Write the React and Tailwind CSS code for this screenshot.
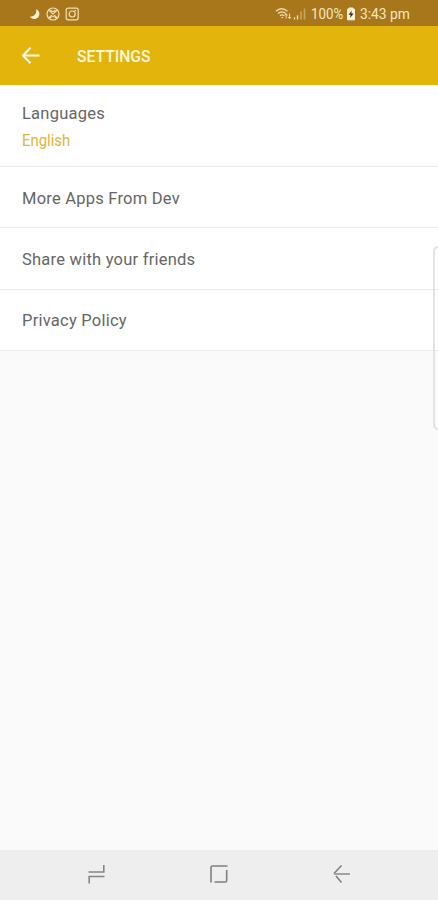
function StatusBar() {
  return (
    <header className="flex h-[26px] shrink-0 items-center bg-[#a8771c] pt-[3px] text-[#f7e6c2]">
      <svg className="mb-[2px] ml-[28px] h-[18px] w-[54px]" viewBox="0 0 54 18" fill="none" stroke="#f2dfb6" strokeWidth="1.2">
        <path d="M8.2 4C11.6 5.8 12.4 9.6 10.2 12.2C7.8 14.8 3.6 14.6 1.8 11.6C5.8 12 9 9 8.2 4Z" fill="#fff1d3" stroke="none" />
        <circle cx="25" cy="9" r="6" />
        <path d="M21 5.4L29 12.6M29 5.4L21 12.6M22.5 5.2Q25 7.5 27.5 5.2M22 13.2Q25 9.8 28 13.2" />
        <rect x="38.2" y="3.2" width="12" height="11.6" rx="2" />
        <circle cx="44.2" cy="9" r="3" />
        <path d="M46.6 5.6h1.4" />
      </svg>
      <div className="ml-auto flex h-full w-[163px] items-center">
        <svg className="mb-px h-[18px] w-[34px] shrink-0" viewBox="0 0 34 18" fill="none" stroke="#f2dfb6" strokeWidth="1.3">
          <path d="M1 6.2Q6.5 1.2 12.5 6.2M3 8.6Q6.8 5.2 10.8 8.6M5 10.8Q7 9 9 10.8" />
          <path d="M6 12L7.2 13.5L8.5 12Z" fill="#f2dfb6" stroke="none" />
          <path d="M11.2 13.5V9M9.8 10.4L11.2 8.8L12.6 10.4M14.6 8.5V13.5M13.2 12L14.6 13.7L16 12" strokeWidth="1" />
          <path d="M19.5 12.2v2.3M22.5 10.2v4.3" />
          <path d="M26 6.5v8M29.5 3.5v11" stroke="#c9a460" strokeWidth="1.6" />
        </svg>
        <span className="ml-[2px] flex w-[33px] shrink-0"><span className="inline-block origin-left scale-x-[0.86] text-[15.5px] leading-none">100%</span></span>
        <svg className="mb-[2px] ml-[2px] h-[14px] w-[10px] shrink-0" viewBox="0 0 10 14">
          <path d="M3 1h4v1.2h1.5v10.6h-7V2.2H3Z" fill="#fff3db" stroke="#fff3db" />
          <path d="M5.7 3.4L2.5 7.7h2L4.2 11L7.6 6.5H5.4Z" fill="#3e300f" />
        </svg>
        <span className="ml-[4px] inline-block origin-left scale-x-[0.89] whitespace-nowrap text-[15.5px] leading-none">3:43 pm</span>
      </div>
    </header>
  );
}

function Row({ title, value }) {
  return (
    <li className={`flex flex-col justify-center border-b border-[#ebebeb] bg-white pt-[3px] pl-[22px] ${value ? "h-[82px]" : "h-[61.4px]"}`}>
      <span className="text-[16.5px] leading-[24px] tracking-[0.23px] text-[#666666]">{title}</span>
      {value && <span className="mt-[3px] origin-left scale-x-[0.93] text-[16px] leading-[23px] text-[#dfb636]">{value}</span>}
    </li>
  );
}

export default function App() {
  return (
    <div className="relative flex h-[900px] w-[438px] flex-col overflow-hidden bg-[#fafafa] font-['Roboto',sans-serif]">
      <StatusBar />
      <div className="flex h-[59px] shrink-0 items-center bg-[#e2b40c] pt-px">
        <svg className="ml-[21px] h-[18px] w-[20px]" viewBox="0 0 20 18" fill="none" stroke="#fffbe9" strokeWidth="2">
          <path d="M18.5 8.5H2M9.5 .8L2 8.5L9.5 16.2" />
        </svg>
        <h1 className="ml-[36px] origin-left scale-x-[0.95] pt-[2px] text-[16.5px] font-medium leading-none text-[#fff8dc]">SETTINGS</h1>
      </div>
      <ul className="flex-1">
        <Row title="Languages" value="English" />
        <Row title="More Apps From Dev" />
        <Row title="Share with your friends" />
        <Row title="Privacy Policy" />
      </ul>
      <div className="absolute top-[246px] -right-[6px] h-[184px] w-[11px] rounded-[5px] border-2 border-[#e2e2e2]" />
      <nav className="flex h-[50px] shrink-0 items-start bg-[#eeeeee] pt-[14px]">
        <svg className="ml-[87px] h-[20px] w-[20px]" viewBox="0 0 20 20" fill="none" stroke="#858585" strokeWidth="1.6">
          <path d="M1.5 8H16.8V1M17.5 12.5H2.2V19.5" />
        </svg>
        <svg className="ml-[102px] h-[20px] w-[20px]" viewBox="0 0 20 20" fill="none" stroke="#808080" strokeWidth="1.6">
          <path d="M18.5 2H3.5Q2 2 2 4V18.5" />
          <path d="M17.7 6V16.5Q17.7 18 16 18H5.5" />
        </svg>
        <svg className="ml-[103px] h-[20px] w-[20px]" viewBox="0 0 20 20" fill="none" stroke="#808080" strokeWidth="1.6">
          <path d="M9.5 1.5L1.8 9.7M4 12L9.5 18.5" />
          <path d="M2 10H18" stroke="#a3a3a3" strokeWidth="2" />
        </svg>
      </nav>
    </div>
  );
}
